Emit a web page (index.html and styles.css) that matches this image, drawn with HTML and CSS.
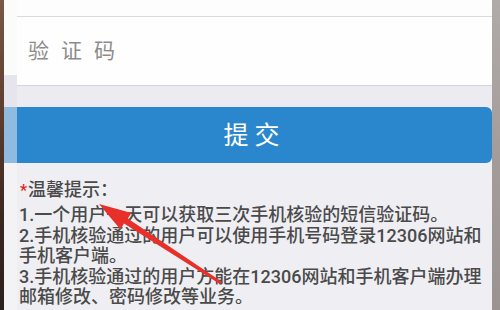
FILE: index.html
```html
<!DOCTYPE html>
<html lang="zh-CN">
<head>
<meta charset="utf-8">
<title>验证码</title>
<link rel="stylesheet" href="styles.css">
</head>
<body>
<div class="screen">
  <div class="edge-left"></div>
  <div class="gutter"></div>
  <main class="main">
    <div class="top-space"></div>
    <div class="input-row">
      <span class="placeholder">验证码</span>
    </div>
    <div class="gap"></div>
    <button class="submit" type="button">提 交</button>
    <section class="notes">
      <h2 class="notes-title"><span class="star">*</span>温馨提示：</h2>
      <p class="notes-text">1.一个用户一天可以获取三次手机核验的短信验证码。</p>
      <p class="notes-text">2.手机核验通过的用户可以使用手机号码登录12306网站和手机客户端。</p>
      <p class="notes-text">3.手机核验通过的用户方能在12306网站和手机客户端办理邮箱修改、密码修改等业务。</p>
    </section>
  </main>
  <div class="edge-right"></div>
  <svg class="arrow" width="500" height="310" viewBox="0 0 500 310" aria-hidden="true">
    <polygon points="99,204 131.5,213 127.8,218.6 221.8,281.7 220.2,284.3 124,223.6 120.5,229.5" fill="#e8302b"/>
  </svg>
</div>
</body>
</html>
```

FILE: styles.css
```css
html, body {
  margin: 0;
  padding: 0;
}

body {
  width: 500px;
  height: 310px;
  overflow: hidden;
  font-family: "Roboto", "Noto Sans CJK SC", sans-serif;
}

.screen {
  position: relative;
  display: flex;
  width: 500px;
  height: 310px;
}

.edge-left {
  width: 4px;
  flex: none;
  background: linear-gradient(to bottom, #7a5746 0%, #5a3b2c 40%, #3a2820 70%, #2a201c 100%);
}

.gutter {
  width: 13px;
  flex: none;
  background: linear-gradient(to bottom,
    #fbfbfc 0px, #fbfbfc 75px,
    #e6e5ed 75px, #e6e5ed 107px,
    #8fbbe0 107px, #8fbbe0 163px,
    #f3f3f6 163px, #f3f3f6 310px);
}

.main {
  flex: 1;
  display: flex;
  flex-direction: column;
  background: #efeff3;
}

.top-space {
  height: 16px;
  background: #fdfdfd;
  border-bottom: 1px solid #d9d9de;
}

.input-row {
  height: 68px;
  background: #fefefe;
  border-bottom: 1px solid #d4d4da;
  display: flex;
  align-items: center;
  padding-left: 11px;
}

.placeholder {
  font-size: 21px;
  letter-spacing: 12px;
  color: #8c8c8c;
  line-height: 1;
}

.gap {
  height: 21px;
  background: #ecebf1;
}

.submit {
  height: 56px;
  border: 0;
  margin: 0;
  padding: 0 6px 0 0;
  background: #2a87cd;
  border-radius: 0 6px 6px 0;
  color: #ffffff;
  font-family: "Roboto", "Noto Sans CJK SC", sans-serif;
  font-size: 25px;
  line-height: 1;
  text-align: center;
}

.notes {
  padding: 17px 4px 0 2px;
  color: #4a4a4a;
  font-size: 18px;
  font-weight: 500;
}

.notes-title {
  margin: 0 0 4px 0;
  font-size: 18px;
  font-weight: 500;
  line-height: 20px;
  padding-left: 1px;
}

.star {
  color: #e02424;
  font-size: 16px;
  margin-right: 1px;
}

.notes-text {
  margin: 0;
  line-height: 20.5px;
}

.edge-right {
  width: 8px;
  flex: none;
  background: linear-gradient(to bottom, #b0aaa8 0%, #a39c9a 50%, #9a9391 100%);
}

.arrow {
  position: absolute;
  left: 0;
  top: 0;
  pointer-events: none;
}
```
